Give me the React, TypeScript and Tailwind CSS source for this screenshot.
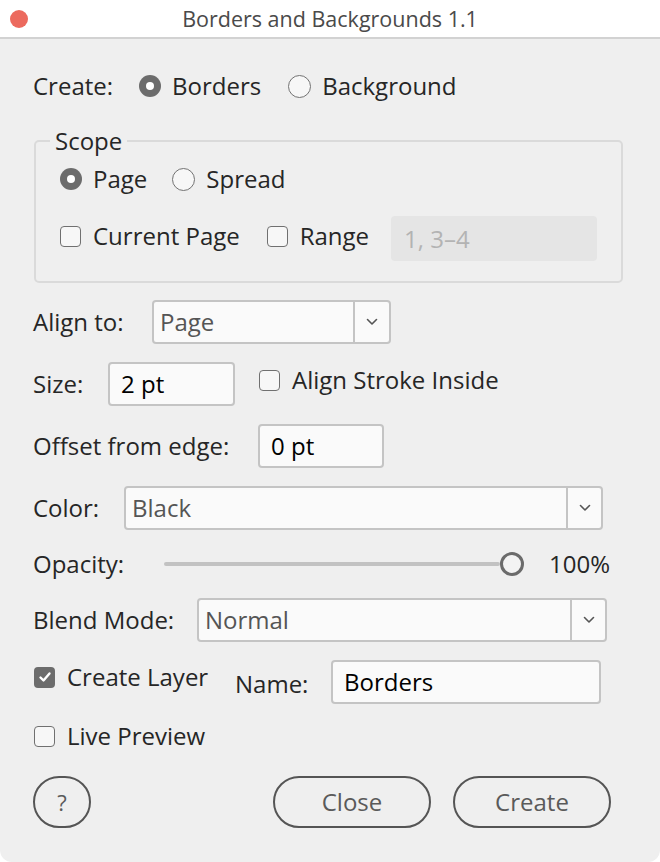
import React from 'react';

const font = { fontFamily: "'Open Sans', 'Noto Sans', sans-serif" };

function Radio({ checked, label }: { checked?: boolean; label: string }) {
  return (
    <div className="flex items-center">
      {checked ? (
        <span className="flex h-[22px] w-[22px] items-center justify-center rounded-full bg-[#6c6c6c]">
          <span className="h-[8px] w-[8px] rounded-full bg-white" />
        </span>
      ) : (
        <span className="h-[23px] w-[23px] rounded-full border-[1.5px] border-[#727272] bg-[#f7f7f7]" />
      )}
      <span className="ml-[11px] text-[#262626]">{label}</span>
    </div>
  );
}

function Check({ checked, label }: { checked?: boolean; label: string }) {
  return (
    <div className="flex items-center">
      {checked ? (
        <span className="flex h-[21px] w-[21px] items-center justify-center rounded-[4px] bg-[#6c6c6c]">
          <svg width="14" height="14" viewBox="0 0 14 14" fill="none">
            <path d="M2.5 7.5 L5.5 10.5 L11.5 3.5" stroke="white" strokeWidth="2.4" strokeLinecap="round" strokeLinejoin="round" />
          </svg>
        </span>
      ) : (
        <span className="h-[21px] w-[21px] rounded-[4px] border-[1.5px] border-[#707070] bg-[#f7f7f7]" />
      )}
      <span className="ml-[12px] text-[#262626]">{label}</span>
    </div>
  );
}

function Select({ value, width, arrow }: { value: string; width: string; arrow: string }) {
  return (
    <div className={`flex h-[44px] ${width} items-stretch rounded-[4px] border-2 border-[#c4c4c4] bg-[#fafafa]`}>
      <div className="flex flex-1 items-center pl-[6px] text-[#555555]">{value}</div>
      <div className={`flex ${arrow} items-center justify-center border-l-2 border-[#c4c4c4]`}>
        <svg width="12" height="8" viewBox="0 0 12 8" fill="none">
          <path d="M1.5 1.5 L6 6 L10.5 1.5" stroke="#555" strokeWidth="1.6" strokeLinecap="round" strokeLinejoin="round" />
        </svg>
      </div>
    </div>
  );
}

function TextInput({ value, width }: { value: string; width: string }) {
  return (
    <div className={`flex h-[44px] ${width} items-center rounded-[4px] border-2 border-[#c4c4c4] bg-[#fafafa] pl-[11px] text-black`}>
      {value}
    </div>
  );
}

export default function App() {
  return (
    <div className="h-[862px] w-[660px] bg-white text-[24px] leading-none" style={font}>
      <div className="flex h-[862px] flex-col overflow-hidden rounded-b-[12px] bg-[#efefef]">
        <div className="relative flex h-[39px] shrink-0 items-center justify-center border-b-2 border-[#d2d2d2] bg-white">
          <span className="absolute left-[10px] top-[10px] h-[18px] w-[18px] rounded-full bg-[#ec6a5e]" />
          <span className="text-[21.5px] text-[#4a4a4a]">Borders and Backgrounds 1.1</span>
        </div>

        <div className="flex flex-col pl-[33px] pr-[37px]">
          <div className="mt-[25px] flex h-[44px] items-center">
            <span className="w-[106px] text-[#262626]">Create:</span>
            <Radio checked label="Borders" />
            <div className="ml-[27px]">
              <Radio label="Background" />
            </div>
          </div>

          <fieldset className="ml-[1px] mt-[20px] rounded-[5px] border-2 border-[#dadada] px-[24px] pb-[20px]">
            <legend className="-ml-[10px] px-[5px] leading-[26px] text-[#262626]">Scope</legend>
            <div className="mt-[9px] flex h-[32px] items-center">
              <Radio checked label="Page" />
              <div className="ml-[25px]">
                <Radio label="Spread" />
              </div>
            </div>
            <div className="mt-[21px] flex h-[45px] items-center">
              <div className="-mt-[5px] flex items-center">
                <Check label="Current Page" />
                <div className="ml-[27px]">
                  <Check label="Range" />
                </div>
              </div>
              <div className="ml-[22px] flex h-[45px] flex-1 items-center rounded-[4px] bg-[#e5e5e5] pl-[13px] text-[#b3b3b3]">
                1, 3–4
              </div>
            </div>
          </fieldset>

          <div className="mt-[17px] flex h-[44px] items-center">
            <span className="w-[119px] text-[#262626]">Align to:</span>
            <Select value="Page" width="w-[239px]" arrow="w-[36px]" />
          </div>

          <div className="mt-[18px] flex h-[44px] items-center">
            <span className="w-[75px] text-[#262626]">Size:</span>
            <TextInput value="2 pt" width="w-[127px]" />
            <div className="-mt-[8px] ml-[24px]">
              <Check label="Align Stroke Inside" />
            </div>
          </div>

          <div className="mt-[18px] flex h-[44px] items-center">
            <span className="w-[225px] text-[#262626]">Offset from edge:</span>
            <TextInput value="0 pt" width="w-[126px]" />
          </div>

          <div className="mt-[18px] flex h-[44px] items-center">
            <span className="w-[91px] text-[#262626]">Color:</span>
            <Select value="Black" width="w-[479px]" arrow="w-[35px]" />
          </div>

          <div className="mt-[12px] flex h-[44px] items-center">
            <span className="w-[131px] text-[#262626]">Opacity:</span>
            <div className="flex w-[360px] items-center">
              <div className="h-[4px] flex-1 rounded-full bg-[#c2c2c2]" />
              <span className="h-[24px] w-[24px] rounded-full border-[3px] border-[#6b6b6b] bg-[#f3f3f3]" />
            </div>
            <span className="ml-[25px] text-[#262626]">100%</span>
          </div>

          <div className="mt-[12px] flex h-[44px] items-center">
            <span className="w-[164px] text-[#262626]">Blend Mode:</span>
            <Select value="Normal" width="w-[410px]" arrow="w-[35px]" />
          </div>

          <div className="mt-[18px] flex h-[44px] items-center">
            <div className="-mt-[10px] ml-[1px] w-[201px]">
              <Check checked label="Create Layer" />
            </div>
            <span className="mt-[3px] w-[96px] text-[#262626]">Name:</span>
            <TextInput value="Borders" width="w-[270px]" />
          </div>

          <div className="ml-[1px] mt-[15px] flex h-[34px] items-center">
            <Check label="Live Preview" />
          </div>

          <div className="mt-[23px] flex h-[52px] items-center">
            <button className="flex h-[52px] w-[58px] items-center justify-center rounded-full border-2 border-[#555555] text-[22px] text-[#5a5a5a]">
              ?
            </button>
            <button className="ml-auto flex h-[52px] w-[158px] items-center justify-center rounded-full border-2 border-[#555555] text-[#5a5a5a]">
              Close
            </button>
            <button className="ml-[22px] mr-[12px] flex h-[52px] w-[158px] items-center justify-center rounded-full border-2 border-[#555555] text-[#5a5a5a]">
              Create
            </button>
          </div>
        </div>
      </div>
    </div>
  );
}
